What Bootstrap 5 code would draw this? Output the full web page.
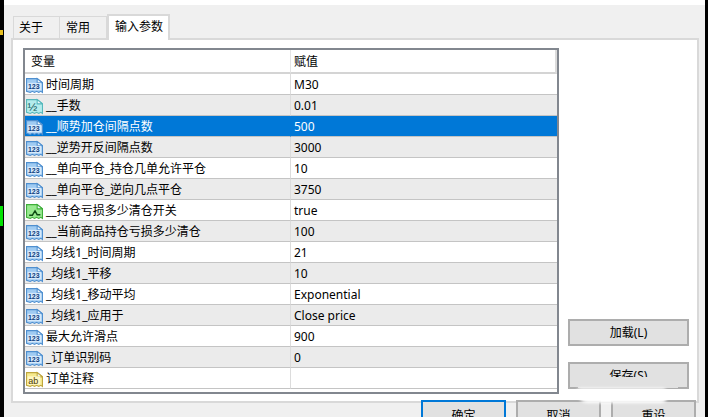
<!DOCTYPE html>
<html lang="en">
<head>
    <meta charset="UTF-8">
    <meta name="viewport" content="width=device-width, initial-scale=1.0">
    <title>输入参数</title>
    <link rel="stylesheet" href="https://cdn.jsdelivr.net/npm/bootstrap@5.3.3/dist/css/bootstrap.min.css">
<style>
    html, body { height: 417px; overflow: hidden; }
    body {
        background: #000;
        font-family: "Noto Sans", "Noto Sans CJK SC", sans-serif;
        font-size: 12px;
        color: #000;
        padding: 0 3px 0 4px;
    }
    .dlg-window { height: 417px; overflow: hidden; background: #f0f0f0; border-top: 5px solid #fff; padding: 9px 6px 0 7px; }
    .dlg-tabs { border: 0; padding-left: 2px; height: 24px; flex-wrap: nowrap; }
    .dlg-tabs .nav-link {
        width: 47px; height: 22px; margin: 2px 0 0; padding: 0 0 0 6px; color: #000; font-size: 12px; line-height: 21px;
        border: 2px solid #d9d9d9; border-width: 1px 1px 0 0; border-radius: 0; background: #f0f0f0;
    }
    .dlg-tabs .nav-item:first-child .nav-link { border-left-width: 1px; padding-left: 5px; }
    .dlg-tabs .nav-link.active {
        width: 63px; height: 26px; margin: 0; padding: 0 0 0 6px; background: #fff; border: 2px solid #d9d9d9; border-bottom: 0;
        line-height: 21px; position: relative; z-index: 1; color: #000;
    }
    .dlg-panel { height: 365px; background: #fff; border: 2px solid #d9d9d9; padding: 8px 10px; gap: 9px; }
    .param-box { width: 536px; height: 346px; border: 2px solid #82878f; overflow: hidden; flex: none; }
    .param-table { width: 532px; table-layout: fixed; border-collapse: separate; border-spacing: 0; margin: 0; }
    .param-table th { height: 24px; font-weight: 400; padding: 2px 0 0 6px; vertical-align: middle; border-bottom: 2px solid #d4d4d4; }
    .param-table th + th { border-left: 1px solid #e4e4e4; padding-left: 3px; border-right: 2px solid #dcdcdc; }
    .param-table td { height: 21px; padding: 2px 0 0 3px; vertical-align: middle; border-bottom: 1px solid #c4c4c4; white-space: nowrap; line-height: 1; }
    .param-table td:first-child { padding-left: 1px; }
    .param-table td + td { border-left: 1px solid #dcdcdc; padding-left: 3px; }
    .param-table tr:nth-child(even) td { background: #ebebeb; }
    .param-table tr.picked td { background: #0078d7; color: #fff; border-left-color: #0078d7; }
    .row-ico { width: 17px; height: 17px; vertical-align: -5px; margin-right: 3px; }
    .side-btns { width: 121px; padding-top: 271px; gap: 16px; }
    .dlg-btn {
        display: block; width: 121px; height: 27px; padding: 0; font-size: 12px; color: #000; background: #e1e1e1;
        border: 2px solid #adadad; border-radius: 0; line-height: 22px;
    }
    .foot-btns { width: 274px; margin: -3px 0 0 410px; gap: 10px; position: relative; z-index: 2; }
    .foot-btns .dlg-btn { flex: none; width: 85px; height: 27px; padding-top: 3px; background: #e1e1e1; }
    .foot-btns .dlg-btn.is-default { border-color: #0078d7; }
    .btn-cover { position: absolute; left: 578px; top: 377px; width: 100px; height: 11px; background: #e1e1e1; z-index: 3; }
    .smudge {
        position: absolute; left: 577px; top: 388px; width: 90px; height: 15px; background: #fff;
        border-radius: 8px 10px 12px 24px; filter: blur(1.5px); z-index: 3;
    }
    .edge-mark { position: absolute; left: 0; }
    .edge-green { top: 206px; width: 3px; height: 20px; background: #00e000; }
    .edge-yellow { top: 30px; width: 3px; height: 5px; background: #e8c020; }
</style>
</head>
<body>
    <div class="dlg-window">
        <ul class="nav nav-tabs dlg-tabs">
            <li class="nav-item"><a class="nav-link" href="#">关于</a></li>
            <li class="nav-item"><a class="nav-link" href="#">常用</a></li>
            <li class="nav-item"><a class="nav-link active" href="#">输入参数</a></li>
        </ul>
        <div class="dlg-panel d-flex">
            <div class="param-box">
                <table class="param-table">
                    <colgroup><col style="width:265px"><col></colgroup>
                    <thead><tr><th>变量</th><th>赋值</th></tr></thead>
                    <tbody id="param-rows"></tbody>
                </table>
            </div>
            <div class="side-btns d-flex flex-column">
                <button class="btn dlg-btn">加载(L)</button>
                <button class="btn dlg-btn">保存(S)</button>
            </div>
        </div>
        <div class="foot-btns d-flex">
            <button class="btn dlg-btn is-default">确定</button>
            <button class="btn dlg-btn">取消</button>
            <button class="btn dlg-btn">重设</button>
        </div>
    </div>
    <div class="btn-cover"></div>
    <div class="smudge"></div>
    <div class="edge-mark edge-green"></div>
    <div class="edge-mark edge-yellow"></div>

    <script>
        let params = [
            ["num", "时间周期", "M30"],
            ["half", "__手数", "0.01"],
            ["num", "__顺势加仓间隔点数", "500"],
            ["num", "__逆势开反间隔点数", "3000"],
            ["num", "__单向平仓_持仓几单允许平仓", "10"],
            ["num", "__单向平仓_逆向几点平仓", "3750"],
            ["flag", "__持仓亏损多少清仓开关", "true"],
            ["num", "__当前商品持仓亏损多少清仓", "100"],
            ["num", "_均线1_时间周期", "21"],
            ["num", "_均线1_平移", "10"],
            ["num", "_均线1_移动平均", "Exponential"],
            ["num", "_均线1_应用于", "Close price"],
            ["num", "最大允许滑点", "900"],
            ["num", "_订单识别码", "0"],
            ["text", "订单注释", ""]
        ];

        // page icon with dog ear, colours per value type: fill, edge, ink
        let icoColors = {
            num: ["#9fcbf2", "#4f8fcf", "#0f3f7f"],
            half: ["#b4ecec", "#55b8bc", "#0f5458"],
            flag: ["#98ea90", "#3fae3a", "#0c4a12"],
            text: ["#f6ea8e", "#bfa63e", "#4a3c00"]
        };

        function rowIcon(type) {
            let c = icoColors[type];
            let inner = "";
            if (type === "num") inner = `<rect x="1.5" y="5.5" width="13" height="7" fill="#d6e9fa"/><text x="1.8" y="11.5" font-size="6.6" font-weight="700" font-family="Liberation Sans" fill="${c[2]}">123</text>`;
            if (type === "half") inner = `<text x="1.5" y="12.500" font-size="11" font-family="Liberation Sans" fill="${c[2]}">½</text>`;
            if (type === "text") inner = `<rect x="1.5" y="5" width="12" height="8" fill="#fff7c4"/><text x="2" y="11.8" font-size="8.5" font-family="Liberation Sans" fill="${c[2]}">ab</text>`;
            if (type === "flag") inner = `<path d="M3 11.5h3l2.5-4 2 3.5h3" fill="none" stroke="${c[2]}" stroke-width="1.3"/>`;
            return `<svg class="row-ico" viewBox="0 0 16 16"><path d="M.5 1.5h10l5 4v9l-1.5-1-2 1-2-1-2 1-2-1-2 1-3.500-1z" fill="${c[0]}" stroke="${c[1]}"/><path d="M10.500 1.500v4h5z" fill="#eef6fd" stroke="${c[1]}"/>${inner}</svg>`;
        }

        document.getElementById("param-rows").innerHTML = params.map((p, i) =>
            `<tr class="${i === 2 ? "picked" : ""}"><td>${rowIcon(p[0])}${p[1]}</td><td>${p[2]}</td></tr>`
        ).join("");
    </script>
</body>
</html>
